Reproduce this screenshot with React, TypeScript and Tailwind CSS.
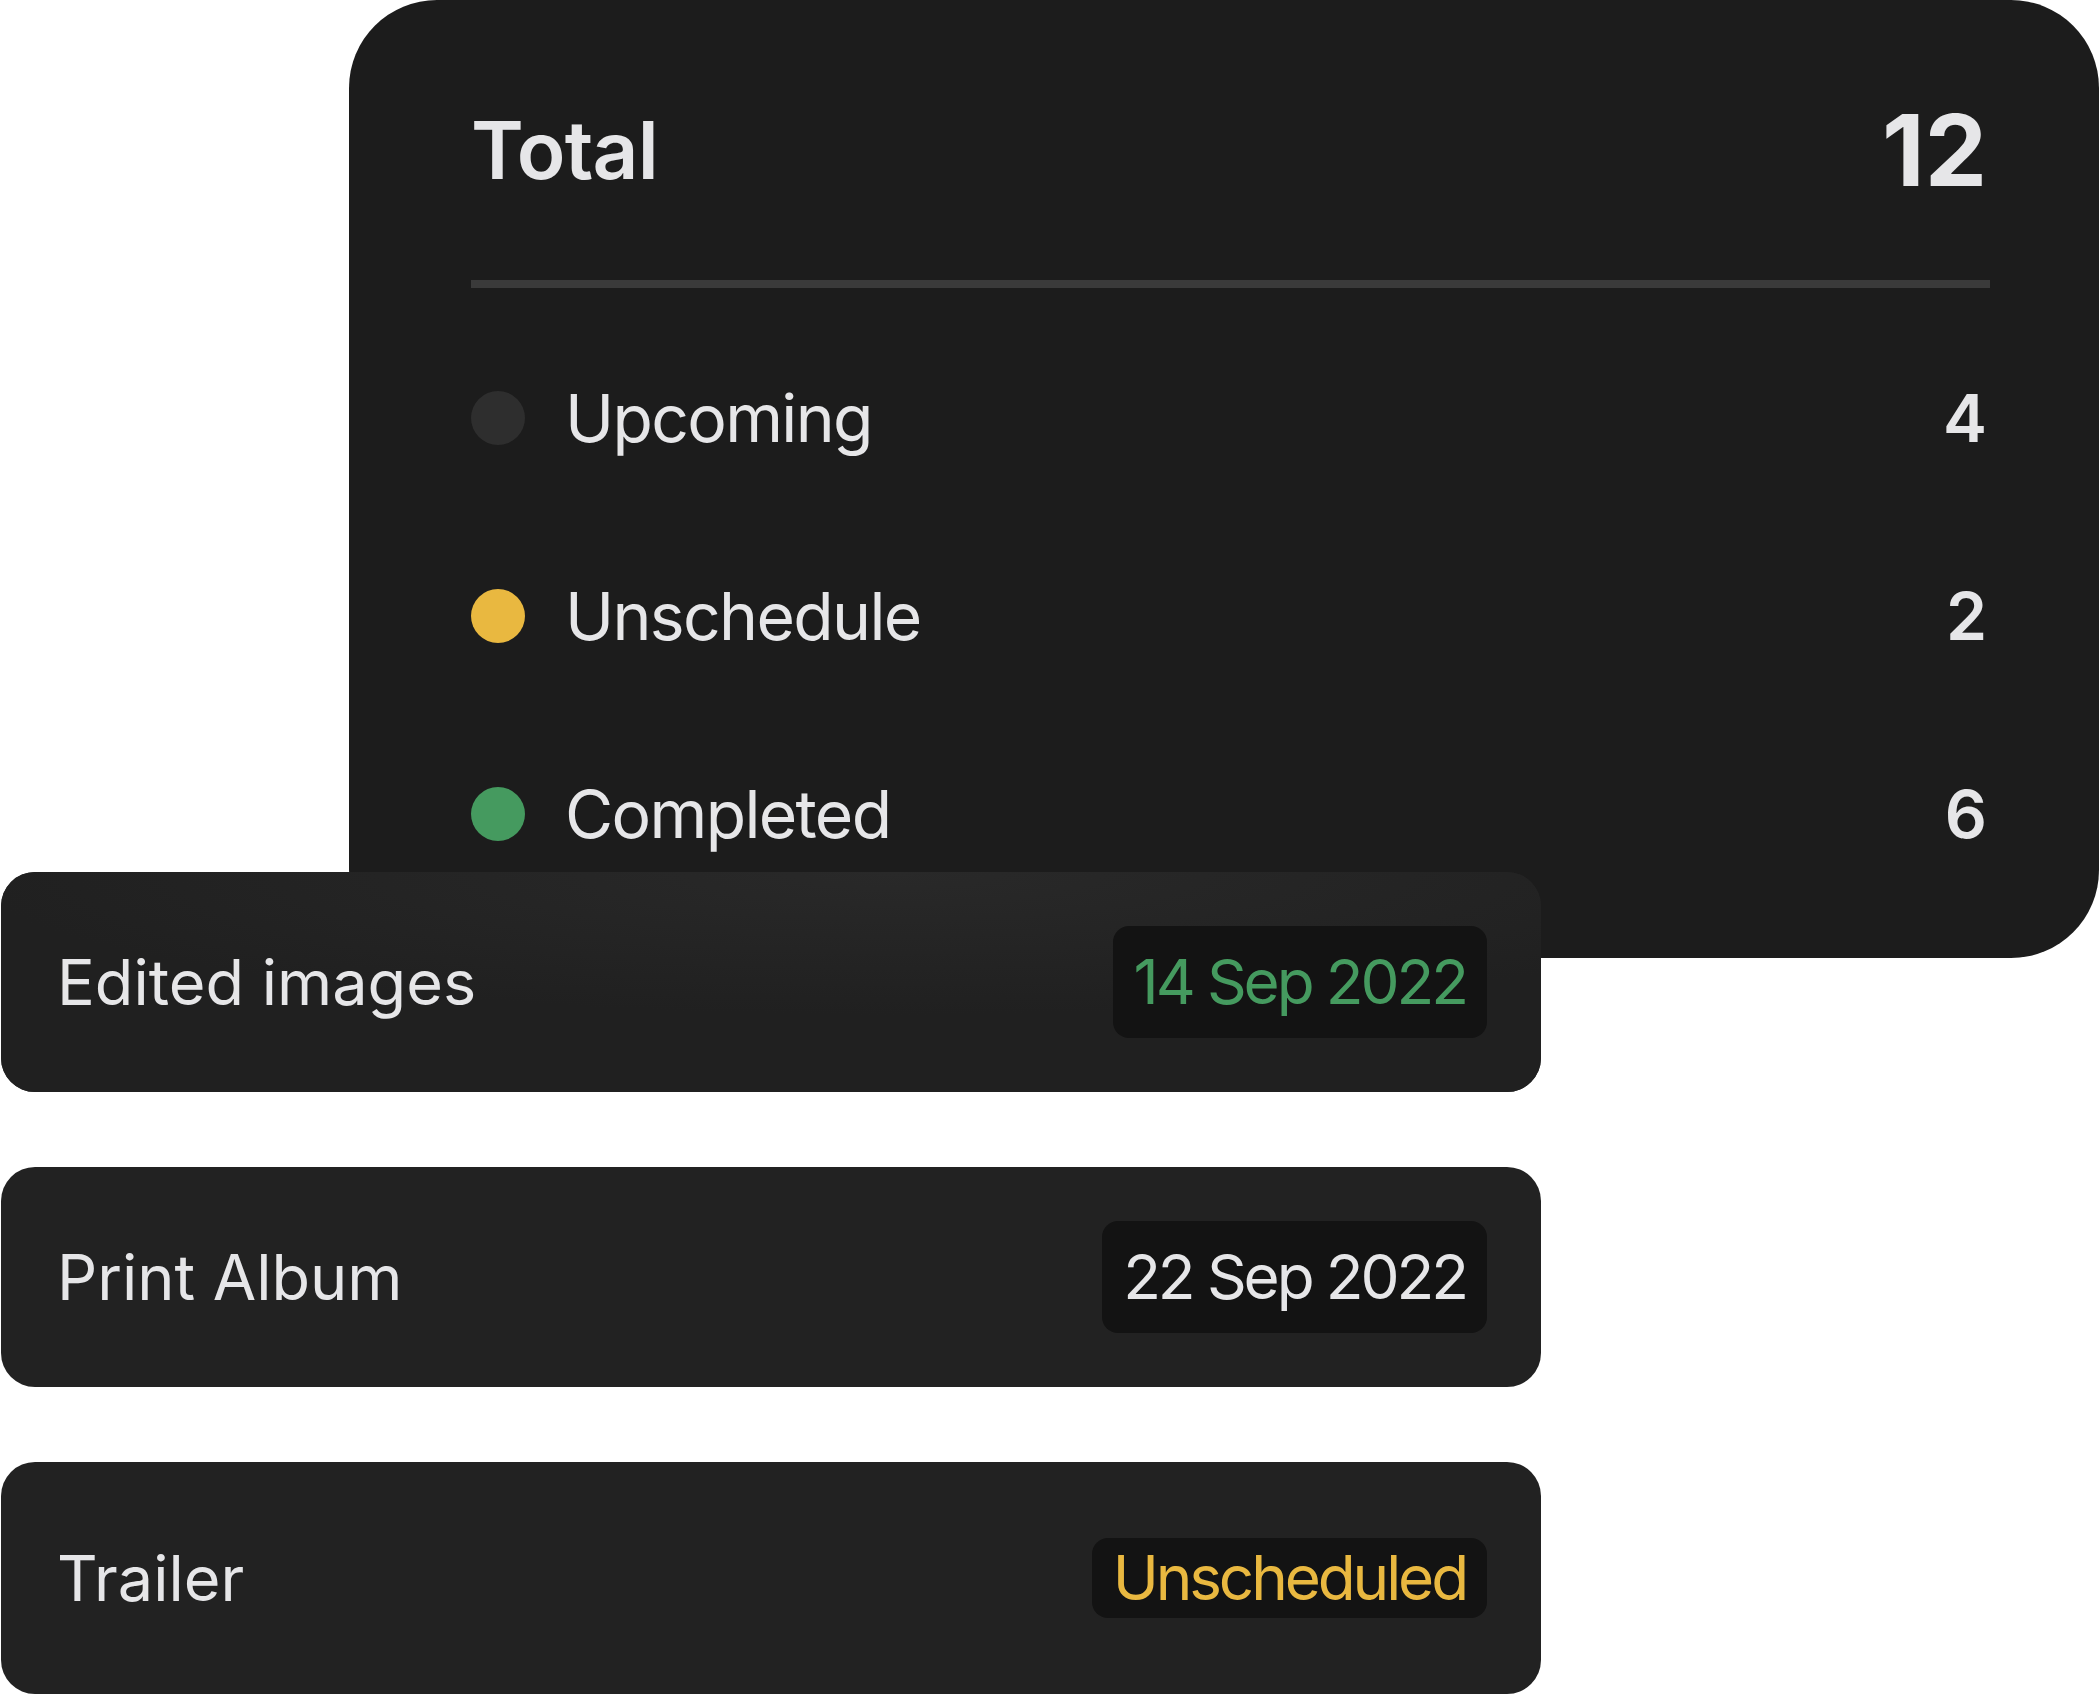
import React from "react";

const rows = [
  { label: "Upcoming", count: 4, dot: "bg-[#2e2e2e]" },
  { label: "Unschedule", count: 2, dot: "bg-[#e9b840]" },
  { label: "Completed", count: 6, dot: "bg-[#459a5f]" },
];

const tasks = [
  { title: "Edited images", badge: "14 Sep 2022", tone: "text-[#459a5f]", badgeH: "h-[112px]", cardH: "h-[220px]", glow: true },
  { title: "Print Album", badge: "22 Sep 2022", tone: "text-[#e6e6e8]", badgeH: "h-[112px]", cardH: "h-[220px]", glow: false },
  { title: "Trailer", badge: "Unscheduled", tone: "text-[#e9b840]", badgeH: "h-[80px]", cardH: "h-[232px]", glow: false },
];

function SummaryCard() {
  return (
    <div className="ml-[349px] w-[1750px] h-[958px] rounded-[88px] bg-[#1c1c1c] pl-[122px] pr-[109px] pt-[20px] text-[#e6e6e8]">
      <div className="h-[260px] flex items-center justify-between">
        <span className="text-[80px] font-semibold leading-none tracking-[-0.01em]">Total</span>
        <span className="text-[99px] font-bold leading-none mr-[3px]">12</span>
      </div>
      <div className="h-[8px] bg-[#3a3a3a]" />
      <div className="mt-[31px] flex flex-col">
        {rows.map((row) => (
          <div key={row.label} className="h-[198px] flex items-center">
            <div className={`w-[54px] h-[54px] rounded-full ${row.dot}`} />
            <span className="ml-[40px] text-[66px] leading-none tracking-[-0.025em]">{row.label}</span>
            <span className="ml-auto mr-[3px] text-[66px] font-semibold leading-none">{row.count}</span>
          </div>
        ))}
      </div>
    </div>
  );
}

function TaskCard({ task }: { task: (typeof tasks)[number] }) {
  return (
    <div
      className={`relative ${task.cardH} rounded-[34px] bg-[#222222] flex items-center justify-between pl-[56px] pr-[54px] overflow-hidden`}
    >
      {task.glow && (
        <div className="absolute inset-0 bg-[radial-gradient(ellipse_60%_65%_at_58%_0%,#292929,#202020)]" />
      )}
      <span className="relative text-[63px] leading-none text-[#e6e6e8]">{task.title}</span>
      <span
        className={`relative ${task.badgeH} rounded-[16px] bg-[#131313] px-[21px] flex items-center text-[62px] leading-none tracking-[-0.05em] ${task.tone}`}
      >
        {task.badge}
      </span>
    </div>
  );
}

export default function App() {
  return (
    <div className="w-[2099px] h-[1696px] bg-white overflow-hidden font-['Inter',sans-serif]">
      <SummaryCard />
      <div className="relative -mt-[86px] ml-px w-[1540px] flex flex-col gap-[75px]">
        {tasks.map((task) => (
          <TaskCard key={task.title} task={task} />
        ))}
      </div>
    </div>
  );
}
